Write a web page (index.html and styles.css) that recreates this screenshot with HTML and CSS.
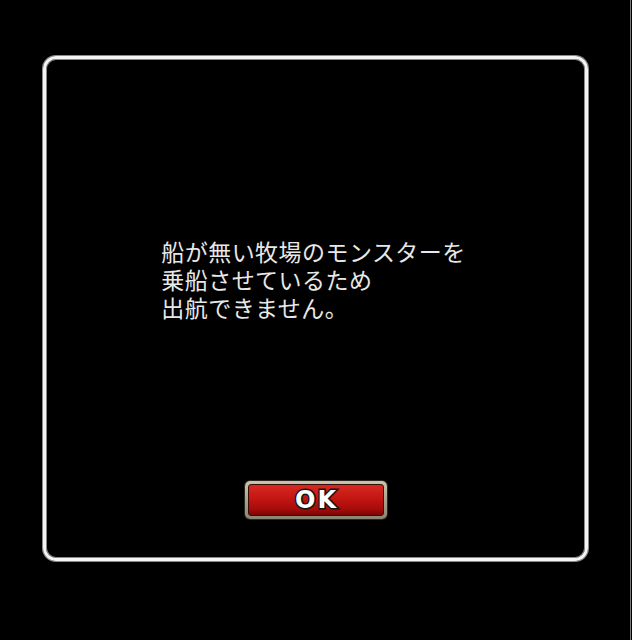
FILE: index.html
```html
<!DOCTYPE html>
<html lang="ja">
<head>
<meta charset="utf-8">
<link rel="stylesheet" href="styles.css">
</head>
<body>
<div class="screen">
  <div class="dialog">
    <div class="message">
      <div class="line">船が無い牧場のモンスターを</div>
      <div class="line">乗船させているため</div>
      <div class="line">出航できません。</div>
    </div>
    <div class="btn-frame">
      <button class="ok-btn">OK</button>
    </div>
  </div>
</div>
</body>
</html>
```
FILE: styles.css
```css
html, body {
  margin: 0;
  padding: 0;
  background: #000;
}
.screen {
  width: 631px;
  height: 640px;
  border-right: 1px solid #7a7a7a;
  background: #000;
  padding: 56px 0 0 43px;
  box-sizing: border-box;
}
.dialog {
  width: 545px;
  height: 505px;
  box-sizing: border-box;
  border: 3px solid #f4f4f4;
  border-radius: 13px;
  box-shadow: 0 0 0 1px #8a8a8a, inset 0 0 0 1px #8a8a8a;
  display: flex;
  flex-direction: column;
  align-items: center;
  padding-top: 178px;
}
.message {
  margin: 0;
  color: #e8e8e8;
  font-family: "Noto Sans CJK JP", "Noto Sans", sans-serif;
  font-size: 23px;
  letter-spacing: 0.45px;
  text-align: left;
  transform: translateX(-2px);
  display: flex;
  flex-direction: column;
}
.line {
  height: 28px;
  line-height: 28px;
}
.btn-frame {
  margin-top: 160px;
  width: 142px;
  height: 38px;
  box-sizing: border-box;
  border-radius: 5px;
  background: linear-gradient(#c9c4ae, #8a8470);
  padding: 3px;
  box-shadow: 0 0 0 1px #2a2620;
}
.ok-btn {
  display: block;
  width: 100%;
  height: 100%;
  border: 1px solid #3a0a06;
  border-radius: 3px;
  background: linear-gradient(#d82a22 0%, #c41612 45%, #a60c0a 80%, #7a0606 100%);
  color: #fff;
  font-family: "DejaVu Sans", "Liberation Sans", sans-serif;
  font-weight: bold;
  font-size: 24px;
  line-height: 28px;
  letter-spacing: 2px;
  padding: 0 0 0 2px;
  -webkit-text-stroke: 3px #1a1a1a;
  paint-order: stroke fill;
  text-shadow: 0 0 2px #000;
}
```
